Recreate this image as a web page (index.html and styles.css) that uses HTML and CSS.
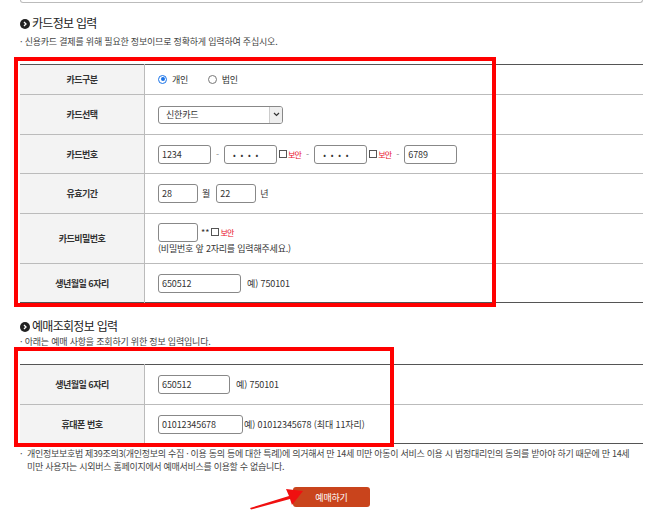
FILE: index.html
```html
<!DOCTYPE html>
<html lang="ko">
<head>
<meta charset="utf-8">
<title>카드정보 입력</title>
<link rel="stylesheet" href="styles.css">
</head>
<body>
<div class="page">
  <div class="topbox"></div>

  <h2 class="sec-title sec1"><span class="dot"><svg width="10" height="10" viewBox="0 0 10 10"><circle cx="5" cy="5" r="5" fill="#222"/><path d="M4 3l2 2-2 2" stroke="#fff" stroke-width="1.3" fill="none"/></svg></span>카드정보 입력</h2>
  <p class="sub">· 신용카드 결제를 위해 필요한 정보이므로 정확하게 입력하여 주십시오.</p>

  <table class="form t1">
    <tr class="r30">
      <th>카드구분</th>
      <td>
        <label class="radio"><span class="rb on"></span>개인</label>
        <label class="radio"><span class="rb"></span>법인</label>
      </td>
    </tr>
    <tr class="r39">
      <th>카드선택</th>
      <td>
        <div class="select"><span class="sel-text">신한카드</span><span class="sel-arrow"><svg width="7" height="5" viewBox="0 0 7 5"><path d="M1 1l2.5 2.5L6 1" stroke="#333" stroke-width="1.2" fill="none"/></svg></span></div>
      </td>
    </tr>
    <tr class="r38">
      <th>카드번호</th>
      <td>
        <div class="line">
          <span class="inp w52">1234</span>
          <span class="dash">-</span>
          <span class="inp w52 dots">• • • •</span>
          <span class="chk"></span><span class="red">보안</span>
          <span class="dash">-</span>
          <span class="inp w52 dots">• • • •</span>
          <span class="chk"></span><span class="red">보안</span>
          <span class="dash">-</span>
          <span class="inp w52">6789</span>
        </div>
      </td>
    </tr>
    <tr class="r39">
      <th>유효기간</th>
      <td>
        <div class="line">
          <span class="inp w38">28</span>
          <span class="unit">월</span>
          <span class="inp w38">22</span>
          <span class="unit">년</span>
        </div>
      </td>
    </tr>
    <tr class="r49">
      <th>카드비밀번호</th>
      <td>
        <div class="line">
          <span class="inp w38"></span>
          <span class="stars">**</span><span class="chk"></span><span class="red">보안</span>
        </div>
        <div class="hint">(비밀번호 앞 2자리를 입력해주세요.)</div>
      </td>
    </tr>
    <tr class="r38 last">
      <th>생년월일 6자리</th>
      <td>
        <div class="line">
          <span class="inp w81">650512</span>
          <span class="ex">예) 750101</span>
        </div>
      </td>
    </tr>
  </table>

  <h2 class="sec-title sec2"><span class="dot"><svg width="10" height="10" viewBox="0 0 10 10"><circle cx="5" cy="5" r="5" fill="#222"/><path d="M4 3l2 2-2 2" stroke="#fff" stroke-width="1.3" fill="none"/></svg></span>예매조회정보 입력</h2>
  <p class="sub">· 아래는 예매 사항을 조회하기 위한 정보 입력입니다.</p>

  <table class="form t2">
    <tr class="r39">
      <th>생년월일 6자리</th>
      <td>
        <div class="line">
          <span class="inp w70">650512</span>
          <span class="ex">예) 750101</span>
        </div>
      </td>
    </tr>
    <tr class="r38 last">
      <th>휴대폰 번호</th>
      <td>
        <div class="line">
          <span class="inp w83">01012345678</span>
          <span class="ex tight">예) 01012345678 (최대 11자리)</span>
        </div>
      </td>
    </tr>
  </table>

  <p class="note"><span class="bul">·</span><span>개인정보보호법 제39조의3(개인정보의 수집 · 이용 동의 등에 대한 특례)에 의거해서 만 14세 미만 아동이 서비스 이용 시 법정대리인의 동의를 받아야 하기 때문에 만 14세 미만 사용자는 시외버스 홈페이지에서 예매서비스를 이용할 수 없습니다.</span></p>

  <div class="btn-row"><button class="btn">예매하기</button></div>
</div>

<div class="mark mark1"></div>
<div class="mark mark2"></div>
<svg class="arrow" width="60" height="28" viewBox="0 0 60 28">
  <path d="M2 25 L41 13 L38 6 L55 8 L44 22 L42 16 L3 26.5 Z" fill="#f01010"/>
</svg>
</body>
</html>
```
FILE: styles.css
```css
html, body {
  margin: 0;
  padding: 0;
  background: #fff;
}
body {
  font-family: "Noto Sans CJK KR", "Noto Sans", sans-serif;
  color: #333;
  position: relative;
  width: 671px;
  height: 516px;
  overflow: hidden;
}
.page {
  margin-left: 20px;
  width: 623px;
}
.topbox {
  height: 2px;
  border: 1px solid #bbb;
  border-top: none;
  border-radius: 0 0 7px 7px;
}
.sec-title {
  margin: 0;
  font-size: 12px;
  font-weight: normal;
  letter-spacing: -0.7px;
  line-height: 16px;
  height: 16px;
  color: #222;
  display: flex;
  align-items: center;
}
.sec1 { margin-top: 12px; }
.sec2 { margin-top: 15px; }
.dot {
  display: inline-flex;
  width: 10px;
  height: 10px;
  margin-right: 2px;
  margin-top: 1px;
}
.sub {
  margin: 3px 0 0;
  font-size: 9px;
  line-height: 12px;
  letter-spacing: -0.2px;
  color: #444;
}
.sec1 + .sub { margin-top: 5px; }
.sec2 + .sub { margin-top: 2px; }
.form {
  width: 623px;
  border-collapse: collapse;
  border-top: 1px solid #555;
  border-bottom: 1px solid #555;
  table-layout: fixed;
  margin-top: 16px;
}
.form th {
  width: 124px;
  background: #f3f3f3;
  border-right: 1px solid #bbb;
  font-size: 9px;
  font-weight: bold;
  letter-spacing: -0.5px;
  color: #333;
  text-align: center;
  padding: 0;
}
.form td {
  padding: 0 0 0 13px;
  font-size: 9px;
  color: #333;
}
.form tr { border-bottom: 1px solid #bbb; }
.form tr.last { border-bottom: 1px solid #555; }
.r30 { height: 30px; }
.r38 { height: 39px; }
.r39 { height: 40px; }
.r49 { height: 50px; }
.radio {
  display: inline-flex;
  align-items: center;
  margin-right: 17px;
  font-size: 9px;
  letter-spacing: -0.2px;
}
.rb {
  width: 7px;
  height: 7px;
  border: 1px solid #777;
  border-radius: 50%;
  margin-right: 5px;
  background: #fff;
  position: relative;
}
.rb.on {
  border-color: #1a73e8;
}
.rb.on::after {
  content: "";
  position: absolute;
  left: 1.5px;
  top: 1.5px;
  width: 4px;
  height: 4px;
  border-radius: 50%;
  background: #1a73e8;
}
.select {
  width: 123px;
  height: 16px;
  border: 1px solid #888;
  border-radius: 3px;
  display: flex;
  overflow: hidden;
}
.sel-text {
  flex: 1;
  padding-left: 7px;
  line-height: 16px;
  font-size: 9px;
  letter-spacing: -0.2px;
}
.sel-arrow {
  width: 12px;
  background: #eee;
  border-left: 1px solid #ccc;
  display: flex;
  align-items: center;
  justify-content: center;
}
.line {
  display: flex;
  align-items: center;
}
.inp {
  display: inline-block;
  height: 17px;
  border: 1px solid #888;
  border-radius: 3px;
  box-sizing: content-box;
  line-height: 17px;
  padding-left: 3px;
  font-size: 9px;
  color: #333;
  letter-spacing: -0.1px;
  white-space: pre;
}
.w52 { width: 48px; }
.w38 { width: 35px; }
.w81 { width: 78px; }
.w70 { width: 67px; }
.w83 { width: 80px; }
.dots { padding-left: 8px; width: 43px; font-size: 8px; letter-spacing: 1.5px; }
.dash {
  width: 13px;
  text-align: center;
  color: #888;
}
.chk {
  width: 6px;
  height: 6px;
  border: 1px solid #555;
  margin-left: 2px;
  background: #fff;
}
.red {
  color: #e8112d;
  font-size: 8px;
  letter-spacing: -0.8px;
  margin-left: 1px;
}
.unit { margin: 0 6px 0 4px; }
.stars { margin-left: 3px; letter-spacing: 0; }
.hint {
  margin-top: 1px;
  letter-spacing: -0.2px;
  line-height: 12px;
}
.ex {
  margin-left: 6px;
  letter-spacing: -0.1px;
}
.ex.tight { margin-left: 1px; }
.note {
  margin: 3px 0 0;
  font-size: 9px;
  line-height: 13px;
  letter-spacing: -0.3px;
  word-break: keep-all;
  color: #444;
  display: flex;
}
.bul { flex: none; width: 7px; }
.btn-row {
  display: flex;
  justify-content: center;
  margin-top: 14px;
}
.btn {
  width: 77px;
  height: 20px;
  background: #c9441c;
  color: #fff;
  border: none;
  border-radius: 3px;
  font-family: "Noto Sans CJK KR", sans-serif;
  font-size: 9px;
  letter-spacing: -0.2px;
  padding: 0;
}
.mark {
  position: absolute;
  border: 4px solid #ff0000;
  box-sizing: border-box;
  pointer-events: none;
}
.mark1 { left: 14px; top: 57px; width: 482px; height: 250px; }
.mark2 { left: 14px; top: 347px; width: 380px; height: 100px; }
.arrow {
  position: absolute;
  left: 248px;
  top: 483px;
}
```
